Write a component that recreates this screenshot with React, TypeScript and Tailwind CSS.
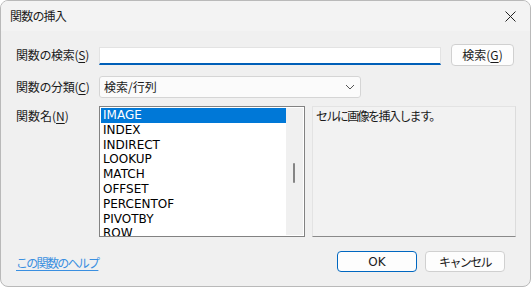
const FUNCS = ["IMAGE", "INDEX", "INDIRECT", "LOOKUP", "MATCH", "OFFSET", "PERCENTOF", "PIVOTBY", "ROW"];

const jp = { fontFamily: '"Noto Sans CJK JP", "Noto Sans", sans-serif' };
const latin = { fontFamily: 'Tahoma, "DejaVu Sans", "Liberation Sans", sans-serif' };

function Key({ k }: { k: string }) {
  return (
    <>
      (<span className="underline underline-offset-2">{k}</span>)
    </>
  );
}

export default function App() {
  return (
    <div
      className="flex h-[287px] w-[531px] flex-col overflow-hidden rounded-lg border border-[#b9b9b9] bg-[#f0f0f0] text-[12px] text-[#1a1a1a]"
      style={jp}
    >
      {/* title bar */}
      <div className="flex h-[30px] shrink-0 items-center justify-between bg-[#f3f3f3] pl-[9px] pr-[14px]">
        <span className="text-[12px] leading-none tracking-[-0.8px]">関数の挿入</span>
        <svg width="11" height="11" viewBox="0 0 11 11" className="text-[#222]">
          <path d="M0.5 0.5 L10.5 10.5 M10.5 0.5 L0.5 10.5" stroke="currentColor" strokeWidth="1" />
        </svg>
      </div>

      <div className="flex flex-1 flex-col pl-[15px]">
        {/* search row */}
        <div className="mt-[13px] flex h-[22px] items-center">
          <label className="w-[83px] leading-none tracking-[-0.3px]">
            関数の検索<Key k="S" />
          </label>
          <div className="mt-[2px] h-[18px] w-[342px] border border-[#e3e3e3] border-b-2 border-b-[#005fb8] bg-white" />
          <button className="ml-[10px] h-[22px] w-[63px] rounded-[4px] border border-[#d0d0d0] bg-[#fdfdfd] leading-none">
            検索<Key k="G" />
          </button>
        </div>

        {/* category row */}
        <div className="mt-[10px] flex h-[22px] items-center">
          <label className="w-[83px] leading-none tracking-[-0.3px]">
            関数の分類<Key k="C" />
          </label>
          <div className="flex h-[22px] w-[262px] items-center justify-between rounded-[3px] border border-[#d5d5d5] bg-[#fbfbfb] pl-[4px] pr-[5px]">
            <span className="leading-none">検索/行列</span>
            <svg width="10" height="6" viewBox="0 0 10 6" className="text-[#555]">
              <path d="M1 1 L5 5 L9 1" stroke="currentColor" fill="none" strokeWidth="1" />
            </svg>
          </div>
        </div>

        {/* list + description */}
        <div className="mt-[8px] flex h-[131px]">
          <label className="w-[83px] pt-[4px] leading-none">
            関数名<Key k="N" />
          </label>
          <div className="flex h-full w-[206px] overflow-hidden border border-[#828282] bg-white p-[1px]">
            <div className="flex flex-1 flex-col" style={latin}>
              {FUNCS.map((f, i) => (
                <div
                  key={f}
                  className={`h-[14.8px] shrink-0 pl-[2px] text-[12px] leading-[14.8px] ${
                    i === 0 ? "bg-[#0078d7] text-white" : "text-black"
                  }`}
                >
                  {f}
                </div>
              ))}
            </div>
            <div className="relative w-[17px] shrink-0 bg-[#f0f0f0]">
              <div className="absolute left-[7px] top-[55px] h-[20px] w-[2px] rounded bg-[#858585]" />
            </div>
          </div>
          <div className="ml-[7px] h-full w-[204px] border border-[#e3e3e3] border-b-[#8a8a8a] border-r-[#dcdcdc] bg-[#f2f2f2] px-[3px] pt-[3px] leading-none tracking-[-1.6px]">
            セルに画像を挿入します。
          </div>
        </div>

        {/* footer */}
        <div className="mt-[14px] flex h-[21px] items-center">
          <a className="mt-[2px] text-[#3a8fe0] underline underline-offset-2 tracking-[-1.7px]">この関数のヘルプ</a>
          <button
            className="ml-auto h-[21px] w-[80px] rounded-[4px] border border-[#0067c0] bg-[#fdfdfd] leading-none"
            style={latin}
          >
            OK
          </button>
          <button className="ml-[8px] mr-[25px] h-[21px] w-[80px] rounded-[4px] border border-[#d0d0d0] bg-[#fdfdfd] leading-none tracking-[-1.6px]">
            キャンセル
          </button>
        </div>
      </div>
    </div>
  );
}
